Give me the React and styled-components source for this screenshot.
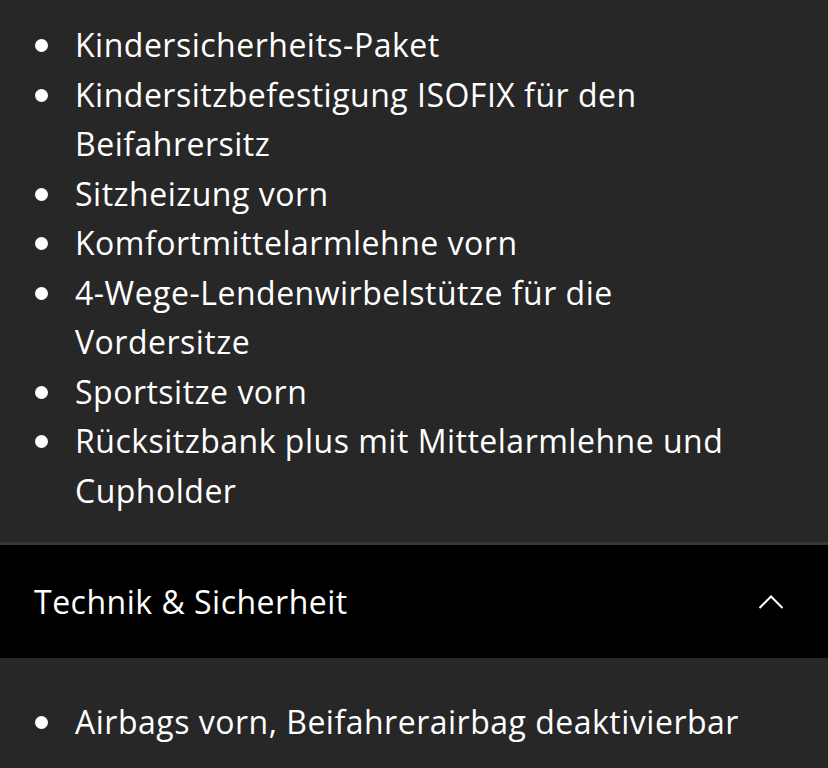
import React from "react";
import styled, { createGlobalStyle } from "styled-components";

const GlobalStyle = createGlobalStyle`
  html, body {
    margin: 0;
    padding: 0;
    background: #272727;
  }
  body {
    font-family: "Open Sans", "Noto Sans", sans-serif;
    color: #ffffff;
  }
`;

const Page = styled.div`
  width: 828px;
  height: 768px;
  overflow: hidden;
  background: #272727;
`;

const Section = styled.div`
  padding: ${(p) => p.pad};
  border-bottom: ${(p) => (p.divider ? "3px solid #383838" : "none")};
`;

const List = styled.ul`
  list-style: none;
  margin: 0;
  padding: 0;
`;

const Item = styled.li`
  position: relative;
  padding-left: 75px;
  padding-right: 60px;
  font-size: 32px;
  line-height: 49.5px;
  letter-spacing: 0.5px;

  &::before {
    content: "";
    position: absolute;
    left: 35px;
    top: 19px;
    width: 13px;
    height: 13px;
    border-radius: 50%;
    background: #ffffff;
  }
`;

const Header = styled.div`
  display: flex;
  align-items: center;
  justify-content: space-between;
  height: 113px;
  padding: 0 44px 0 34px;
  background: #000000;
  font-size: 32px;
  letter-spacing: 0.5px;
`;

const Chevron = () => (
  <svg width="26" height="16" viewBox="0 0 26 16" fill="none">
    <path d="M1.5 14 L13 2.5 L24.5 14" stroke="#fff" strokeWidth="2" />
  </svg>
);

const comfort = [
  "Kindersicherheits-Paket",
  "Kindersitzbefestigung ISOFIX für den Beifahrersitz",
  "Sitzheizung vorn",
  "Komfortmittelarmlehne vorn",
  "4-Wege-Lendenwirbelstütze für die Vordersitze",
  "Sportsitze vorn",
  "Rücksitzbank plus mit Mittelarmlehne und Cupholder",
];

const App = () => (
  <Page>
    <GlobalStyle />
    <Section pad="20px 0 27px" divider>
      <List>
        {comfort.map((t) => (
          <Item key={t}>{t}</Item>
        ))}
      </List>
    </Section>
    <Header>
      <span>Technik &amp; Sicherheit</span>
      <Chevron />
    </Header>
    <Section pad="39px 0 0">
      <List>
        <Item>Airbags vorn, Beifahrerairbag deaktivierbar</Item>
      </List>
    </Section>
  </Page>
);

export default App;
